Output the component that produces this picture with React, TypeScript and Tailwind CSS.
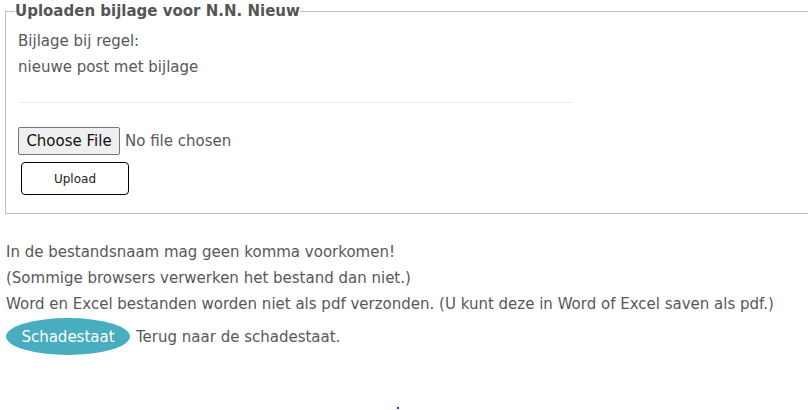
export default function App() {
  return (
    <div className="relative w-[808px] h-[410px] overflow-hidden bg-white text-[15px] text-[#585858] font-['DejaVu_Sans',Verdana,sans-serif]">
      <fieldset className="ml-[5px] w-[820px] border border-[#c0c0c0] px-[12px] pt-[6px] pb-[18px]">
        <legend className="-ml-[3px] px-0 leading-[22px] font-bold text-[#555]">
          Uploaden bijlage voor N.N. Nieuw
        </legend>
        <div className="leading-[26px]">
          <div>Bijlage bij regel:</div>
          <div>nieuwe post met bijlage</div>
        </div>
        <hr className="mt-[22px] w-[556px] border-t border-[#eee]" />
        <div className="mt-[24px] flex items-center gap-[5px]">
          <button className="h-[28px] w-[102px] rounded-[2px] border border-[#767676] bg-[#efefef] text-[#111]">
            Choose File
          </button>
          <span>No file chosen</span>
        </div>
        <button className="ml-[3px] mt-[7px] block h-[33px] w-[108px] rounded-[4px] border border-black bg-white text-[12px] text-[#222]">
          Upload
        </button>
      </fieldset>

      <div className="ml-[6px] mt-[25px] leading-[26px]">
        <div>In de bestandsnaam mag geen komma voorkomen!</div>
        <div>(Sommige browsers verwerken het bestand dan niet.)</div>
        <div>Word en Excel bestanden worden niet als pdf verzonden. (U kunt deze in Word of Excel saven als pdf.)</div>
        <div className="mt-[1px] flex items-center gap-[6px]">
          <button className="h-[37px] w-[124px] rounded-[50%] bg-[#47adbf] text-white">
            Schadestaat
          </button>
          <span>Terug naar de schadestaat.</span>
        </div>
      </div>

      <div className="absolute left-[397px] top-[407px] h-[2px] w-[2px] bg-[#2233ff]" />
    </div>
  )
}
